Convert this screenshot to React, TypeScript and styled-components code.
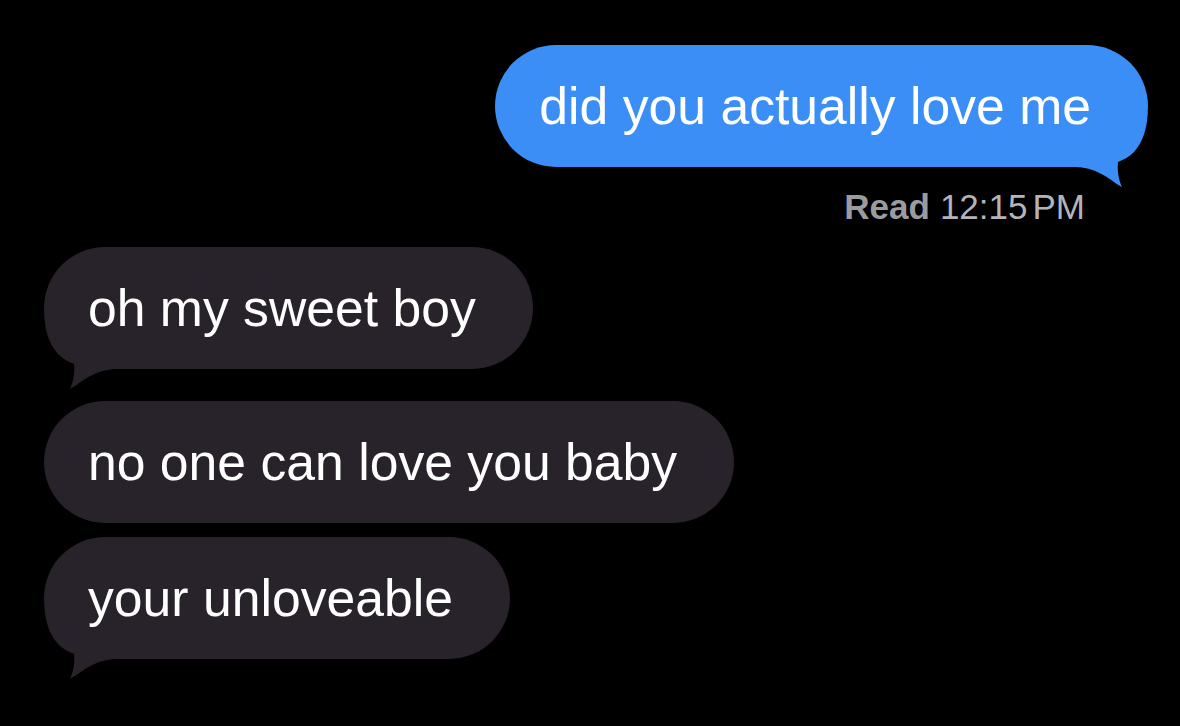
import React from "react";
import styled, { createGlobalStyle } from "styled-components";

const Global = createGlobalStyle`
  html, body {
    margin: 0;
    padding: 0;
    background: #000;
  }
  body {
    font-family: "Liberation Sans", Arial, Helvetica, sans-serif;
    -webkit-font-smoothing: antialiased;
  }
`;

const Screen = styled.div`
  width: 1180px;
  height: 726px;
  background: #000;
  box-sizing: border-box;
  padding: 45px 32px 0 44px;
  display: flex;
  flex-direction: column;
  overflow: hidden;
`;

const Row = styled.div<{ $side: "left" | "right"; $gap: number }>`
  display: flex;
  justify-content: ${(p) => (p.$side === "right" ? "flex-end" : "flex-start")};
  margin-top: ${(p) => p.$gap}px;
`;

const Bubble = styled.div<{ $side: "left" | "right" }>`
  position: relative;
  box-sizing: border-box;
  height: 122px;
  padding: 30px 57px 30px 44px;
  border-radius: 61px;
  background: ${(p) => (p.$side === "right" ? "#3a8ef5" : "#28222b")};
  color: #fff;
  font-size: 51.7px;
  line-height: 62px;
  white-space: nowrap;
`;

const BubbleText = styled.span`
  position: relative;
  z-index: 1;
`;

const TailSvg = styled.svg<{ $side: "left" | "right" }>`
  position: absolute;
  z-index: 0;
  bottom: -25px;
  ${(p) => (p.$side === "right" ? "right: 0;" : "left: 0; transform: scaleX(-1);")}
  width: 74px;
  height: 85px;
  overflow: visible;
`;

const Receipt = styled.div`
  display: flex;
  justify-content: flex-end;
  margin-top: 20px;
  padding-right: 63px;
  font-size: 35px;
  line-height: 40px;
  color: #a2a2a6;
  white-space: nowrap;
`;

const ReadLabel = styled.span`
  font-weight: 700;
  color: #9c9ca0;
  margin-right: 10px;
`;

const Time = styled.span`
  color: #b4b4b8;
`;

const ThinSpace = styled.span`
  display: inline-block;
  width: 5px;
`;

function Tail({ side, color }: { side: "left" | "right"; color: string }) {
  return (
    <TailSvg $side={side} viewBox="-74 -60 74 85" aria-hidden="true">
      <path
        d="M -0.4 -55 C -0.4 -40 -5 -25 -14 -15 C -19 -10 -25 -7 -30 -5 C -31 4 -29 14 -26 20 C -36 15 -48 1 -72 0 L -72 -10 L -40 -58 Z"
        fill={color}
      />
    </TailSvg>
  );
}

type Msg = { text: string; tail: boolean; gap: number };

const incoming: Msg[] = [
  { text: "oh my sweet boy", tail: true, gap: 20 },
  { text: "no one can love you baby", tail: false, gap: 32 },
  { text: "your unloveable", tail: true, gap: 14 },
];

export default function App() {
  return (
    <>
      <Global />
      <Screen>
        <Row $side="right" $gap={0}>
          <Bubble $side="right">
            <Tail side="right" color="#3a8ef5" />
            <BubbleText>did you actually love me</BubbleText>
          </Bubble>
        </Row>
        <Receipt>
          <ReadLabel>Read</ReadLabel>
          <Time>
            12:15<ThinSpace />PM
          </Time>
        </Receipt>
        {incoming.map((m) => (
          <Row key={m.text} $side="left" $gap={m.gap}>
            <Bubble $side="left">
              {m.tail && <Tail side="left" color="#28222b" />}
              <BubbleText>{m.text}</BubbleText>
            </Bubble>
          </Row>
        ))}
      </Screen>
    </>
  );
}
